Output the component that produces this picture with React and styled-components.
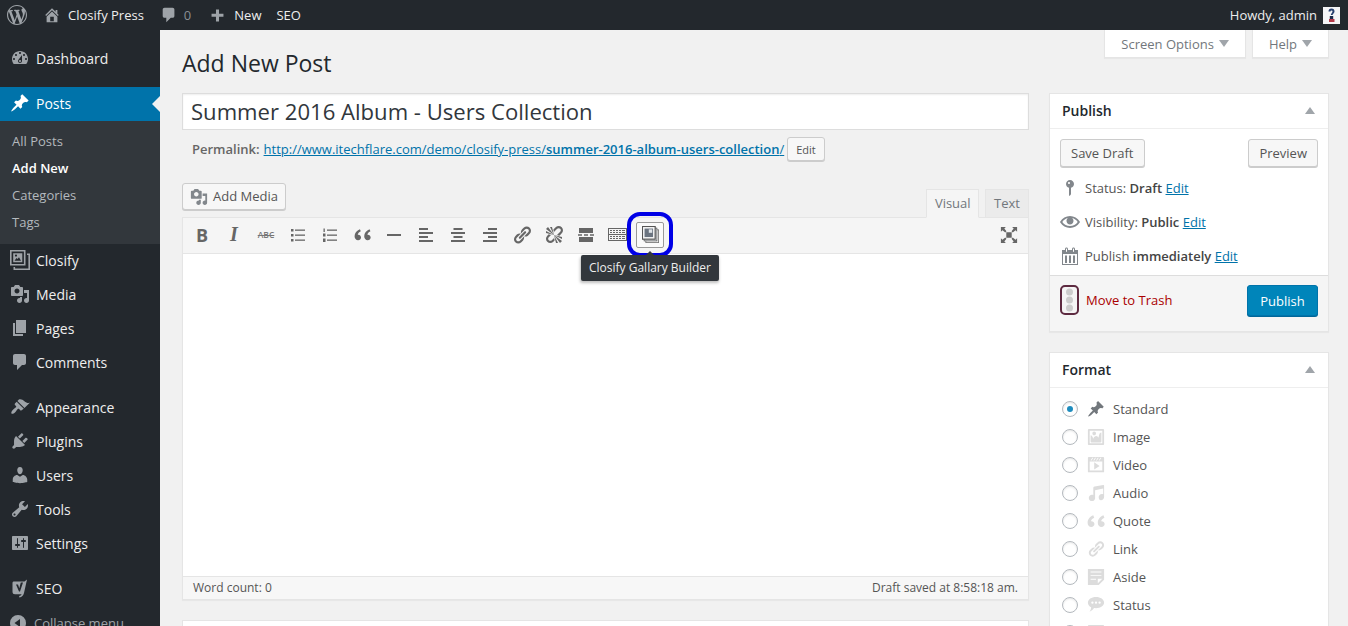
import React from 'react';
import styled, { createGlobalStyle } from 'styled-components';

const Global = createGlobalStyle`
  html, body { margin: 0; padding: 0; height: 626px; overflow: hidden; background: #f1f1f1; }
  body { font-family: "Open Sans", "Liberation Sans", sans-serif; font-size: 13px; color: #444; }
  * { box-sizing: border-box; }
`;

const P = {
  wp: 'M20 10c0-5.51-4.49-10-10-10C4.48 0 0 4.49 0 10c0 5.52 4.48 10 10 10 5.51 0 10-4.48 10-10zM7.78 15.37L4.37 6.22c.55-.02 1.17-.08 1.17-.08.5-.06.44-1.13-.06-1.11 0 0-1.45.11-2.37.11-.18 0-.37 0-.58-.01C4.12 2.69 6.87 1.11 10 1.11c2.33 0 4.45.87 6.05 2.34-.68-.11-1.65.39-1.65 1.58 0 .74.45 1.36.9 2.1.35.61.55 1.36.55 2.46 0 1.49-1.4 5-1.4 5l-3.03-8.37c.54-.02.82-.17.82-.17.5-.05.44-1.25-.06-1.22 0 0-1.44.12-2.38.12-.87 0-2.33-.12-2.33-.12-.5-.03-.56 1.2-.06 1.22l.92.08 1.26 3.41zM17.41 10c.24-.64.74-1.87.43-4.25.7 1.29 1.05 2.71 1.05 4.25 0 3.29-1.73 6.24-4.4 7.78.97-2.59 1.94-5.2 2.92-7.78zM6.1 18.09C3.12 16.65 1.11 13.53 1.11 10c0-1.3.23-2.48.72-3.59C3.25 10.3 4.67 14.2 6.1 18.09zm4.03-6.63l2.58 6.98c-.86.29-1.76.45-2.71.45-.79 0-1.57-.11-2.29-.33.81-2.38 1.62-4.74 2.42-7.1z',
  home: 'M16 8.5l1.53 1.53-1.06 1.06L10 4.62l-6.47 6.47-1.06-1.06L10 2.5l4 4v-2h2v4zm-6-2.46l6 5.99V18H4v-5.97zM12 17v-5H8v5h4z',
  comment: 'M5 2h9c1.1 0 2 .9 2 2v7c0 1.1-.9 2-2 2h-2l-5 5v-5H5c-1.1 0-2-.9-2-2V4c0-1.1.9-2 2-2z',
  plus: 'M17 8v3.5h-5.2V17H8.2v-5.5H3V8h5.2V3h3.6v5H17z',
  dashboard: 'M3.76 16h12.48c1.1-1.37 1.76-3.11 1.76-5 0-4.42-3.58-8-8-8s-8 3.58-8 8c0 1.89.66 3.63 1.76 5zM10 4c.55 0 1 .45 1 1s-.45 1-1 1-1-.45-1-1 .45-1 1-1zM6 6c.55 0 1 .45 1 1s-.45 1-1 1-1-.45-1-1 .45-1 1-1zm8 0c.55 0 1 .45 1 1s-.45 1-1 1-1-.45-1-1 .45-1 1-1zm-5.37 5.55L12 7v6c0 1.1-.9 2-2 2s-2-.9-2-2c0-.57.24-1.08.63-1.45zM4 10c.55 0 1 .45 1 1s-.45 1-1 1-1-.45-1-1 .45-1 1-1zm12 0c.55 0 1 .45 1 1s-.45 1-1 1-1-.45-1-1 .45-1 1-1zm-5 3c0-.55-.45-1-1-1s-1 .45-1 1 .45 1 1 1 1-.45 1-1z',
  pin: 'M10.44 3.02l1.82-1.82 6.36 6.35-1.83 1.82c-1.05-.68-2.48-.57-3.41.36l-.75.75c-.92.93-1.04 2.35-.35 3.41l-1.83 1.82-2.41-2.41-2.8 2.79c-.42.42-3.38 2.71-3.8 2.29s1.86-3.39 2.28-3.81l2.79-2.79L4.1 9.36l1.83-1.82c1.05.69 2.48.57 3.4-.36l.75-.75c.93-.92 1.05-2.35.36-3.41z',
  closify: 'M0 0h15.500v15.500H0V0zm1.600 1.600v12.300h12.300V1.600H1.600zM3.200 3.200h9.100v9.100H3.200V3.200zm1.300 7.600h6.500l-2-3.500-1.500 1.800-1-1-2 2.700zM6 4.500a1.100 1.100 0 100 2.200 1.100 1.100 0 000-2.200zM17 3.500h3V20H3.500v-3h1.600v1.400h13.300V5.100H17V3.500z',
  media: 'M13 11V4c0-.55-.45-1-1-1h-1.670L9 1H5L3.670 3H2c-.55 0-1 .45-1 1v7c0 .55.45 1 1 1h10c.55 0 1-.45 1-1zM7 4.500c1.380 0 2.500 1.120 2.500 2.500S8.380 9.500 7 9.500 4.500 8.380 4.500 7 5.620 4.500 7 4.500zM14 6h5v10.500c0 1.380-1.120 2.500-2.500 2.500S14 17.880 14 16.500s1.120-2.500 2.500-2.500c.17 0 .34.02.5.05V9h-3V6zm-4 8.050V13h2v3.500c0 1.380-1.120 2.500-2.500 2.500S7 17.880 7 16.500 8.120 14 9.500 14c.17 0 .34.02.5.05z',
  page: 'M6 15V2h10v13H6zm-1 1h8v2H3V5h2v11z',
  brush: 'M14.48 11.06L7.41 3.99l1.5-1.5c.5-.56 2.3-.47 3.51.32 1.21.8 1.43 1.28 2.91 2.1 1.18.64 2.45 1.26 4.45.85zm-.71.71L6.7 4.7 4.93 6.47c-.39.39-.39 1.02 0 1.41l1.06 1.06c.39.39.39 1.03 0 1.42-.6.6-1.43 1.11-2.21 1.69-.35.26-.7.53-1.01.84-1.43 1.43-1.78 3.2-1.27 3.71s2.28.16 3.71-1.27c.31-.31.58-.66.84-1.01.58-.78 1.09-1.61 1.69-2.21.39-.39 1.03-.39 1.42 0l1.06 1.06c.39.39 1.02.39 1.41 0z',
  plug: 'M13.11 4.36L9.87 7.6 8 5.73l3.24-3.24c.35-.34 1.05-.2 1.56.32.52.51.66 1.21.31 1.55zm-8 1.77l.91-1.12 9.01 9.01-1.19.84c-.71.71-2.63 1.16-3.82 1.16H6.14L4.9 17.26c-.59.59-1.54.59-2.12 0-.59-.58-.59-1.53 0-2.12l1.24-1.24v-3.88c0-1.13.4-3.19 1.09-3.89zm7.26 3.97l3.24-3.24c.34-.35 1.04-.21 1.55.31.52.51.66 1.21.31 1.55l-3.24 3.25z',
  users: 'M10 9.25c-2.27 0-2.73-3.44-2.73-3.44C7 4.02 7.82 2 9.97 2c2.16 0 2.98 2.02 2.71 3.81 0 0-.41 3.44-2.68 3.44zm0 2.57L12.72 10c2.39 0 4.52 2.33 4.52 4.53v2.49s-3.65 1.13-7.24 1.13c-3.65 0-7.24-1.13-7.24-1.13v-2.49c0-2.25 1.94-4.48 4.47-4.48z',
  tools: 'M16.68 9.77c-1.34 1.34-3.3 1.67-4.95.99l-5.41 6.52c-.99.99-2.59.99-3.58 0s-.99-2.59 0-3.57l6.52-5.42c-.68-1.65-.35-3.61.99-4.95 1.28-1.28 3.12-1.62 4.72-1.06l-2.89 2.89 2.82 2.82 2.86-2.87c.53 1.58.18 3.39-1.08 4.65zM3.81 16.21c.4.39 1.04.39 1.43 0 .4-.4.4-1.04 0-1.43-.39-.4-1.03-.4-1.43 0-.39.39-.39 1.03 0 1.43z',
  settings: 'M18 16V4c0-.55-.45-1-1-1H3c-.55 0-1 .45-1 1v12c0 .55.45 1 1 1h14c.55 0 1-.45 1-1zM8 11h1c.55 0 1 .45 1 1s-.45 1-1 1H8v1.5c0 .28-.22.5-.5.5s-.5-.22-.5-.5V13H6c-.55 0-1-.45-1-1s.45-1 1-1h1V5.5c0-.28.22-.5.5-.5s.5.22.5.5V11zm5-2h-1c-.55 0-1-.45-1-1s.45-1 1-1h1V5.5c0-.28.22-.5.5-.5s.5.22.5.5V7h1c.55 0 1 .45 1 1s-.45 1-1 1h-1v5.5c0 .28-.22.5-.5.5s-.5-.22-.5-.5V9z',
  seo: 'M3.5 3.5h11L17 1.5 14 15c-.6 2.4-2.2 4-4.6 4.5l-.3-1.4c1.2-.3 2-.9 2.5-1.9H5a2.5 2.5 0 01-2.5-2.5V5a1.5 1.5 0 011-1.5zM6 6.5l3 7 1 .1 3-9h-2.2l-1.5 5.6-1.3-3.7H6z',
  collapse: 'M10 2a8 8 0 100 16 8 8 0 000-16zm2 4v8L6.500 10 12 6z',
  quote: 'M8.5 6.2C6.9 6.9 6 8 5.8 9.2c1.6-.2 2.9.9 2.9 2.4 0 1.4-1.1 2.4-2.6 2.4-1.8 0-3.1-1.4-3.1-3.5 0-2.7 1.9-5.1 4.7-6.2l.8 1.9zm8.5 0c-1.6.7-2.5 1.8-2.7 3 1.6-.2 2.9.9 2.9 2.4 0 1.4-1.1 2.4-2.6 2.4-1.8 0-3.1-1.4-3.1-3.5 0-2.7 1.900-5.100 4.700-6.200l.8 1.900z',
  link: 'M17.74 2.76c1.68 1.69 1.68 4.41 0 6.1l-1.53 1.52c-1.12 1.12-2.7 1.47-4.14 1.09l2.62-2.61.76-.77.76-.76c.84-.84.84-2.2 0-3.04-.84-.85-2.2-.85-3.04 0l-.77.76-3.38 3.38c-.37-1.44-.02-3.02 1.1-4.14l1.52-1.53c1.69-1.68 4.42-1.68 6.1 0zM8.59 13.43l5.34-5.34c.42-.42.42-1.1 0-1.52-.44-.43-1.13-.39-1.53 0l-5.33 5.34c-.42.42-.42 1.1 0 1.52.44.43 1.13.39 1.52 0zm-.76 2.29l4.14-4.15c.38 1.44.03 3.02-1.09 4.14l-1.52 1.53c-1.69 1.68-4.41 1.68-6.1 0-1.68-1.68-1.68-4.42 0-6.1l1.53-1.52c1.12-1.12 2.7-1.47 4.14-1.1l-4.14 4.15c-.85.84-.85 2.2 0 3.05.84.84 2.2.84 3.04 0z',
  unlink: 'M17.74 2.26c1.68 1.69 1.68 4.41 0 6.1l-1.53 1.52c-.32.33-.69.58-1.08.77L13 10l1.69-1.64.76-.77.76-.76c.84-.84.84-2.2 0-3.04-.84-.85-2.2-.85-3.04 0l-.77.76-.76.76L10 7l-.65-2.14c.19-.38.44-.75.77-1.07l1.52-1.53c1.69-1.68 4.42-1.68 6.1 0zM2 4l8 6-6-8zm4-2l4 8-2-8H6zM2 6l8 4-8-2V6zm7.36 7.69L10 13l.74 2.35-1.38 1.39c-1.69 1.68-4.41 1.68-6.1 0-1.68-1.68-1.68-4.42 0-6.1l1.39-1.38L7 10l-.69.64-1.52 1.53c-.85.84-.85 2.2 0 3.04.84.85 2.2.85 3.04 0zM18 16l-8-6 6 8zm-4 2l-4-8 2 8h2zm4-4l-8-4 8 2v2z',
  more: 'M3 3h14v5H3V3zm0 9h14v5H3v-5zM2 9.3h4v1.4H2V9.3zm6 0h4v1.4H8V9.3zm6 0h4v1.4h-4V9.3z',
  kitchen: 'M0 3h19v13H0V3zm1 1v5h17V4H1zm0 6v5h17v-5H1zm1-5h2v1H2V5zm3 0h2v1H5V5zm3 0h2v1H8V5zm3 0h2v1h-2V5zm3 0h3v1h-3V5zM2 7h2v1H2V7zm3 0h2v1H5V7zm3 0h2v1H8V7zm3 0h2v1h-2V7zm3 0h3v1h-3V7zM2 11h2v1H2v-1zm3 0h2v1H5v-1zm3 0h2v1H8v-1zm3 0h2v1h-2v-1zm3 0h3v1h-3v-1zM2 13h2v1H2v-1zm3 0h2v1H5v-1zm3 0h2v1H8v-1zm3 0h2v1h-2v-1zm3 0h3v1h-3v-1z',
  fullscreen: 'M7 7h6v6H7V7zM1 1h5.5L4.8 2.7 7.2 5.9 5.9 7.2 2.7 4.8 1 6.5V1zm18 0v5.5l-1.7-1.7-3.2 2.4-1.3-1.3 2.4-3.2L13.5 1H19zM1 19v-5.5l1.7 1.7 3.2-2.4 1.3 1.3-2.4 3.2L6.5 19H1zm18 0h-5.5l1.7-1.7-2.4-3.2 1.3-1.3 3.2 2.4 1.7-1.7V19z',
  status: 'M14 6c0 1.86-1.28 3.41-3 3.86V16c0 1-2 2-2 2V9.86c-1.72-.45-3-2-3-3.86 0-2.21 1.79-4 4-4s4 1.79 4 4zM8 5c0 .55.45 1 1 1s1-.45 1-1-.45-1-1-1-1 .45-1 1z',
  eye: 'M19.7 9.4C17.7 6 14 3.9 10 3.9S2.3 6 .3 9.4L0 10l.3.6c2 3.4 5.7 5.5 9.7 5.5s7.7-2.1 9.7-5.5l.3-.6-.3-.6zM10 14.1c-3.1 0-6-1.6-7.7-4.1C3.6 8 5.7 6.6 8 6.1c-.9.6-1.5 1.7-1.5 2.9 0 1.9 1.6 3.5 3.5 3.5s3.5-1.6 3.5-3.5c0-1.2-.6-2.3-1.5-2.9 2.3.5 4.4 1.9 5.7 3.9-1.7 2.5-4.6 4.1-7.7 4.1z',
  calendar: 'M15 4h3v15H2V4h3V3c0-.41.15-.76.44-1.06.29-.29.65-.44 1.06-.44s.77.15 1.06.44c.29.3.44.65.44 1.06v1h4V3c0-.41.15-.76.44-1.06.29-.29.65-.44 1.06-.44s.77.15 1.06.44c.29.3.44.65.44 1.06v1zM6 3v2.5c0 .14.05.26.15.36.09.09.21.14.35.14s.26-.05.35-.14c.1-.1.15-.22.15-.36V3c0-.14-.05-.26-.15-.35-.09-.1-.21-.15-.35-.15s-.26.05-.35.15c-.1.09-.15.21-.15.35zm7 0v2.5c0 .14.05.26.14.36.1.09.22.14.36.14s.26-.05.36-.14c.09-.1.14-.22.14-.36V3c0-.14-.05-.26-.14-.35-.1-.1-.22-.15-.36-.15s-.26.05-.36.15c-.09.09-.14.21-.14.35zm4 15V8H3v10h14zM5 9.5h2V17H5V9.5zm4 0h2V17H9V9.5zm4 0h2V17h-2V9.5z',
  image: 'M2.25 1h15.5c.69 0 1.25.56 1.25 1.25v15.5c0 .69-.56 1.25-1.25 1.25H2.25C1.56 19 1 18.44 1 17.75V2.25C1 1.56 1.56 1 2.25 1zM17 17V3H3v14h14zM10 6c0-1.1-.9-2-2-2s-2 .9-2 2 .9 2 2 2 2-.9 2-2zm3 5s0-6 3-6v10c0 .55-.45 1-1 1H5c-.55 0-1-.45-1-1V8c2 0 3 4 3 4s1-3 3-3 3 2 3 2z',
  video: 'M2 1h16c.55 0 1 .45 1 1v16l-18-.02V2c0-.55.45-1 1-1zm4 1L4 5h1l2-3H6zm4 0H9L7 5h1zm3 0h-1l-2 3h1zm3 0h-1l-2 3h1zm1 14V6H3v10h14zM8 7l6 4-6 4V7z',
  audio: 'M6.99 3.08l11.02-2c.55-.08.99.45.99 1V14.5c0 1.94-1.57 3.5-3.5 3.5S13 16.44 13 14.5c0-1.93 1.57-3.5 3.5-3.5.54 0 1.04.14 1.5.35V5.08l-9 2V16c-.24 1.7-1.74 3-3.5 3C3.57 19 2 17.44 2 15.5 2 13.57 3.57 12 5.5 12c.54 0 1.04.14 1.5.35V4.08c0-.55.44-.92.99-1z',
  aside: 'M1 1h18v12l-6 6H1V1zm3 3v1h12V4H4zm0 4v1h12V8H4zm6 5v-1H4v1h6zm2 4l5-5h-5v5z',
  chat: 'M10 1c5 0 9 2.7 9 6.2s-4 6.3-9 6.3c-.8 0-1.5-.1-2.2-.2-1.3 1.8-3 3.1-5 4.2 1.1-1.4 1.7-3 1.8-5C2.3 11.4 1 9.4 1 7.2 1 3.7 5 1 10 1zM6 6a1.3 1.3 0 100 2.600A1.3 1.3 0 006 6zm4 0a1.3 1.3 0 100 2.600A1.3 1.3 0 0010 6zm4 0a1.3 1.3 0 100 2.600A1.3 1.3 0 0014 6z',
};

const QUOTE_VIEW = '2.5 1.5 15 15';

const Svg = styled.svg`
  display: block;
  flex: none;
  fill: ${p => p.$color || 'currentColor'};
`;
const Icon = ({ d, size = 20, color, view = '0 0 20 20' }) => (
  <Svg width={size} height={size} viewBox={view} $color={color} fillRule="evenodd"><path d={d} /></Svg>
);

const TopBar = styled.header`
  height: 30px;
  background: #23282d;
  color: #eee;
  display: flex;
  align-items: center;
  padding: 0 8px 0 7px;
  font-size: 13px;
`;
const BarItem = styled.span`
  display: flex;
  align-items: center;
  gap: ${p => p.$gap || 7}px;
  margin-left: ${p => p.$ml || 0}px;
  color: #eee;
`;
const BarCount = styled.span`
  color: #8a8f94;
`;
const Howdy = styled.span`
  margin-left: auto;
  display: flex;
  align-items: center;
  gap: 6px;
  color: #eee;
`;
const Avatar = styled.svg`
  display: block;
  width: 17px;
  height: 17px;
`;

const Shell = styled.div`
  display: flex;
  height: 596px;
  overflow: hidden;
`;
const Side = styled.nav`
  width: 160px;
  flex: none;
  background: #23282d;
  padding-top: 12px;
`;
const MenuItem = styled.div`
  position: relative;
  height: 34px;
  display: flex;
  align-items: center;
  gap: 6px;
  padding: 0 0 2px 10px;
  margin-top: ${p => p.$sep ? 11 : 0}px;
  font-size: 14px;
  color: ${p => p.$active ? '#fff' : '#eee'};
  background: ${p => p.$active ? '#0073aa' : 'transparent'};
  svg { fill: ${p => p.$active ? '#fff' : '#9ea3a8'}; }
  ${p => p.$active && `
    &::after {
      content: '';
      position: absolute;
      right: 0;
      top: 9px;
      border: 8px solid transparent;
      border-right-color: #f1f1f1;
      border-left-width: 0;
    }
  `}
`;
const SubMenu = styled.div`
  background: #32373c;
  padding: 7px 0 8px;
`;
const SubItem = styled.div`
  height: 27px;
  line-height: 27px;
  padding-left: 12px;
  font-size: 13px;
  color: ${p => p.$current ? '#fff' : '#b4b9be'};
  font-weight: ${p => p.$current ? 600 : 400};
`;
const Collapse = styled.div`
  height: 34px;
  display: flex;
  align-items: center;
  gap: 6px;
  padding-left: 8px;
  font-size: 13px;
  color: #9ea3a8;
  svg { fill: #9ea3a8; }
`;

const Main = styled.main`
  flex: 1;
  min-width: 0;
  padding: 0 19px 0 22px;
`;
const MetaRow = styled.div`
  float: right;
  display: flex;
  gap: 6px;
`;
const MetaTab = styled.div`
  height: 28px;
  display: flex;
  align-items: center;
  gap: 5px;
  padding: 0 16px;
  background: #fff;
  border: 1px solid #e5e5e5;
  border-top: 0;
  box-shadow: 0 1px 1px rgba(0,0,0,.04);
  color: #72777c;
  font-size: 13px;
  &::after {
    content: '';
    border: 5px solid transparent;
    border-top: 7px solid #a0a5aa;
    border-bottom: 0;
  }
`;
const Heading = styled.h1`
  margin: 0;
  height: 63px;
  padding-top: 16px;
  line-height: 34px;
  font-size: 23px;
  font-weight: 400;
  color: #23282d;
`;
const Columns = styled.div`
  display: flex;
  gap: 20px;
  align-items: flex-start;
`;
const Left = styled.div`
  width: 847px;
  flex: none;
`;
const Right = styled.aside`
  width: 280px;
  flex: none;
  display: flex;
  flex-direction: column;
  gap: 20px;
`;
const TitleInput = styled.div`
  height: 37px;
  background: #fff;
  border: 1px solid #ddd;
  box-shadow: inset 0 1px 2px rgba(0,0,0,.07);
  padding-left: 8px;
  line-height: 34px;
  font-size: 22.1px;
  color: #32373c;
`;
const Permalink = styled.div`
  display: flex;
  align-items: center;
  height: 24px;
  margin-top: 7px;
  padding-left: 10px;
  color: #666;
  font-size: 13px;
  gap: 3px;
  strong { font-weight: 600; margin-right: 1px; }
`;
const LinkText = styled.a`
  color: #0073aa;
  text-decoration: underline;
  b { font-weight: 600; }
`;
const Button = styled.span`
  display: inline-flex;
  align-items: center;
  gap: ${p => p.$gap || 4}px;
  height: ${p => p.$h || 28}px;
  padding: 0 ${p => p.$px || 10}px;
  background: #f7f7f7;
  border: 1px solid #ccc;
  border-radius: 3px;
  box-shadow: 0 1px 0 #ccc;
  color: #555;
  font-size: ${p => p.$fs || 13}px;
  line-height: 1;
  white-space: nowrap;
`;
const EditorHead = styled.div`
  display: flex;
  align-items: flex-end;
  justify-content: space-between;
  margin-top: 22px;
  height: 34px;
`;
const HeadButton = styled.div`
  align-self: flex-start;
`;
const Tabs = styled.div`
  display: flex;
  gap: 6px;
`;
const Tab = styled.div`
  height: 29px;
  line-height: 26px;
  padding: 0 ${p => p.$active ? 7.5 : 8}px;
  background: ${p => p.$active ? '#f5f5f5' : '#ebebeb'};
  border: 1px solid #e5e5e5;
  border-bottom: ${p => p.$active ? '1px solid #f5f5f5' : '1px solid #e5e5e5'};
  color: #72777c;
  font-size: 13px;
  margin-bottom: -1px;
  position: relative;
`;
const Editor = styled.div`
  border: 1px solid #e5e5e5;
  background: #fff;
  box-shadow: 0 1px 1px rgba(0,0,0,.04);
`;
const Toolbar = styled.div`
  height: 36px;
  display: flex;
  align-items: center;
  gap: 4px;
  padding: 0 5px 2px;
  background: #f5f5f5;
  border-bottom: 1px solid #e5e5e5;
`;
const ToolBtn = styled.span`
  position: relative;
  width: 28px;
  height: 26px;
  display: flex;
  align-items: center;
  justify-content: center;
  flex: none;
  color: #555d66;
  border-radius: 2px;
  ${p => p.$end && 'margin-left: auto;'}
  ${p => p.$active && `
    border: 1px solid #999;
    background: #fafafa;
  `}
`;
const Bold = styled.span`
  font-weight: 700;
  font-size: 18px;
  color: #666;
`;
const Italic = styled.span`
  font-family: "Liberation Serif", serif;
  font-weight: 700;
  font-style: italic;
  font-size: 20px;
  color: #666;
`;
const Strike = styled.span`
  font-size: 8.5px;
  font-weight: 600;
  color: #777;
  text-decoration: line-through;
`;
const Lines = styled.svg`
  display: block;
  width: 20px;
  height: 20px;
  fill: #666;
`;
const GalleryIcon = styled.svg`
  display: block;
  width: 17px;
  height: 17px;
`;
const Highlight = styled.span`
  position: absolute;
  inset: -11px -10px -10px -10px;
  border: 4px solid #0000e6;
  border-radius: 13px;
  pointer-events: none;
`;
const Tooltip = styled.span`
  position: absolute;
  top: 32px;
  left: 50%;
  transform: translateX(-50%);
  height: 26px;
  line-height: 26px;
  padding: 0 8px;
  background: #32373c;
  color: #eee;
  font-size: 12px;
  white-space: nowrap;
  border-radius: 2px;
  box-shadow: 0 2px 3px rgba(0,0,0,.25);
  z-index: 2;
  &::before {
    content: '';
    position: absolute;
    top: -4px;
    left: 50%;
    margin-left: -4px;
    border: 4px solid transparent;
    border-top: 0;
    border-bottom-color: #32373c;
  }
`;
const EditArea = styled.div`
  height: 322px;
  background: #fff;
`;
const StatusBar = styled.div`
  height: 23px;
  display: flex;
  align-items: center;
  justify-content: space-between;
  padding: 0 10px 1px;
  background: #f7f7f7;
  border-top: 1px solid #e5e5e5;
  color: #555;
  font-size: 12px;
`;
const NextBox = styled.div`
  height: 40px;
  margin-top: 20px;
  background: #fff;
  border: 1px solid #e5e5e5;
`;

const Box = styled.section`
  background: #fff;
  border: 1px solid #e5e5e5;
  box-shadow: 0 1px 1px rgba(0,0,0,.04);
`;
const BoxHead = styled.div`
  height: 35px;
  display: flex;
  align-items: center;
  justify-content: space-between;
  padding: 0 12px 2px;
  border-bottom: 1px solid #eee;
  font-size: 14px;
  font-weight: 600;
  color: #23282d;
  &::after {
    content: '';
    border: 5px solid transparent;
    border-bottom: 7px solid #a0a5aa;
    border-top: 0;
    margin-right: 1px;
  }
`;
const Actions = styled.div`
  display: flex;
  justify-content: space-between;
  padding: 10px 10px 0;
`;
const Misc = styled.div`
  padding: 4px 10px 0;
`;
const MiscRow = styled.div`
  height: 34px;
  display: flex;
  align-items: center;
  gap: 5px;
  color: #555;
  b { font-weight: 600; color: #444; }
`;
const MiscIcon = styled.span`
  width: 20px;
  display: flex;
  justify-content: center;
  flex: none;
`;
const MiscText = styled.span`
  display: inline;
`;
const PublishFoot = styled.div`
  height: 56px;
  margin-top: 2px;
  display: flex;
  align-items: flex-start;
  justify-content: space-between;
  padding: 9px 10px 0;
  background: #f5f5f5;
  border-top: 1px solid #ddd;
`;
const Trash = styled.span`
  display: flex;
  align-items: center;
  gap: 7px;
  color: #a00;
`;
const PrimaryBtn = styled.span`
  height: 31px;
  width: 71px;
  display: flex;
  align-items: center;
  justify-content: center;
  background: #0085ba;
  border: 1px solid #0073aa;
  border-radius: 3px;
  box-shadow: 0 1px 0 #006799;
  color: #fff;
  font-size: 13px;
`;
const FormatList = styled.div`
  padding: 7px 12px 0;
`;
const FormatRow = styled.label`
  height: 28px;
  display: flex;
  align-items: center;
  color: #555;
  font-size: 13px;
`;
const Radio = styled.input`
  appearance: none;
  width: 16px;
  height: 16px;
  margin: 0 9px 0 0;
  flex: none;
  background: #fff;
  border: 1px solid #b4b9be;
  border-radius: 50%;
  box-shadow: inset 0 1px 2px rgba(0,0,0,.1);
  display: flex;
  align-items: center;
  justify-content: center;
  &:checked::before {
    content: '';
    width: 6px;
    height: 6px;
    border-radius: 50%;
    background: #1e8cbe;
  }
`;
const FormatIcon = styled.span`
  width: 18px;
  margin-right: 8px;
  flex: none;
  display: flex;
`;

const menuA = [['closify', 'Closify'], ['media', 'Media'], ['page', 'Pages'], ['comment', 'Comments']];
const menuB = [['brush', 'Appearance'], ['plug', 'Plugins'], ['users', 'Users'], ['tools', 'Tools'], ['settings', 'Settings']];
const formats = [
  ['pin', 'Standard', '#72777c'], ['image', 'Image'], ['video', 'Video'], ['audio', 'Audio'],
  ['quote', 'Quote', null, QUOTE_VIEW], ['link', 'Link'], ['aside', 'Aside'], ['chat', 'Status'], ['image', 'Gallery'],
];

const bars = (rows) => rows.map(([x, y, w, h], i) => <rect key={i} x={x} y={y} width={w} height={h} />);

export default function App() {
  return (
    <>
      <Global />
      <TopBar>
        <BarItem><Icon d={P.wp} color="#9ea3a8" /></BarItem>
        <BarItem $ml={16}><Icon d={P.home} size={18} color="#9ea3a8" /><span>Closify Press</span></BarItem>
        <BarItem $ml={16} $gap={6}><Icon d={P.comment} size={18} color="#9ea3a8" /><BarCount>0</BarCount></BarItem>
        <BarItem $ml={18} $gap={8}><Icon d={P.plus} size={17} color="#9ea3a8" /><span>New</span></BarItem>
        <BarItem $ml={15}>SEO</BarItem>
        <Howdy>
          Howdy, admin
          <Avatar viewBox="0 0 17 17">
            <rect width="17" height="17" fill="#f4f4f6" />
            <path d="M5.500 4.500a3 3 0 116 0c0 1.500-1.500 2.300-2 3.500H7.800c0-1.500 1.700-2.300 1.700-3.500a1 1 0 00-2 0H5.500z" fill="#27406f" />
            <rect x="6.800" y="9" width="3.400" height="3" fill="#1c2a4a" />
            <rect x="6" y="12" width="5.500" height="3" fill="#b33a4a" />
          </Avatar>
        </Howdy>
      </TopBar>
      <Shell>
        <Side>
          <MenuItem><Icon d={P.dashboard} />Dashboard</MenuItem>
          <MenuItem $sep $active><Icon d={P.pin} />Posts</MenuItem>
          <SubMenu>
            <SubItem>All Posts</SubItem>
            <SubItem $current>Add New</SubItem>
            <SubItem>Categories</SubItem>
            <SubItem>Tags</SubItem>
          </SubMenu>
          {menuA.map(([i, t]) => <MenuItem key={t}><Icon d={P[i]} />{t}</MenuItem>)}
          {menuB.map(([i, t], n) => <MenuItem key={t} $sep={n === 0}><Icon d={P[i]} />{t}</MenuItem>)}
          <MenuItem $sep><Icon d={P.seo} />SEO</MenuItem>
          <Collapse><Icon d={P.collapse} />Collapse menu</Collapse>
        </Side>
        <Main>
          <MetaRow>
            <MetaTab>Screen Options</MetaTab>
            <MetaTab>Help</MetaTab>
          </MetaRow>
          <Heading>Add New Post</Heading>
          <Columns>
            <Left>
              <TitleInput>Summer 2016 Album - Users Collection</TitleInput>
              <Permalink>
                <strong>Permalink:</strong>
                <LinkText>http://www.itechflare.com/demo/closify-press/<b>summer-2016-album-users-collection</b>/</LinkText>
                <Button $h={24} $px={8} $fs={11}>Edit</Button>
              </Permalink>
              <EditorHead>
                <HeadButton>
                  <Button $h={27} $px={7} $gap={5}><Icon d={P.media} size={18} color="#82878c" /> Add Media</Button>
                </HeadButton>
                <Tabs>
                  <Tab $active>Visual</Tab>
                  <Tab>Text</Tab>
                </Tabs>
              </EditorHead>
              <Editor>
                <Toolbar>
                  <ToolBtn><Bold>B</Bold></ToolBtn>
                  <ToolBtn><Italic>I</Italic></ToolBtn>
                  <ToolBtn><Strike>ABC</Strike></ToolBtn>
                  <ToolBtn><Lines viewBox="0 0 20 20">{bars([[3, 4, 2.500, 2.500], [3, 9, 2.500, 2.500], [3, 14, 2.500, 2.500], [7, 4.500, 10, 1.300], [7, 9.500, 10, 1.300], [7, 14.500, 10, 1.300]])}</Lines></ToolBtn>
                  <ToolBtn><Lines viewBox="0 0 20 20">{bars([[3.500, 3.500, 1.300, 3.500], [3, 8.500, 2.500, 3], [3, 13.500, 2.500, 3.500], [7, 4.500, 10, 1.300], [7, 9.500, 10, 1.300], [7, 14.500, 10, 1.300]])}</Lines></ToolBtn>
                  <ToolBtn><Icon d={P.quote} size={17} color="#666" view={QUOTE_VIEW} /></ToolBtn>
                  <ToolBtn><Lines viewBox="0 0 20 20">{bars([[3, 9, 14, 2]])}</Lines></ToolBtn>
                  <ToolBtn><Lines viewBox="0 0 20 20">{bars([[3, 3, 9, 2], [3, 7, 14, 2], [3, 11, 9, 2], [3, 15, 14, 2]])}</Lines></ToolBtn>
                  <ToolBtn><Lines viewBox="0 0 20 20">{bars([[5.500, 3, 9, 2], [3, 7, 14, 2], [5.500, 11, 9, 2], [3, 15, 14, 2]])}</Lines></ToolBtn>
                  <ToolBtn><Lines viewBox="0 0 20 20">{bars([[8, 3, 9, 2], [3, 7, 14, 2], [8, 11, 9, 2], [3, 15, 14, 2]])}</Lines></ToolBtn>
                  <ToolBtn><Icon d={P.link} color="#666" /></ToolBtn>
                  <ToolBtn><Icon d={P.unlink} color="#666" /></ToolBtn>
                  <ToolBtn><Icon d={P.more} color="#666" /></ToolBtn>
                  <ToolBtn><Icon d={P.kitchen} color="#666" /></ToolBtn>
                  <ToolBtn $active>
                    <GalleryIcon viewBox="0 0 20 20">
                      <rect x="4.500" y="4.500" width="15" height="15" fill="#f2f2f2" stroke="#777" />
                      <rect x="2.500" y="2.500" width="15" height="15" fill="#e8edf2" stroke="#666" />
                      <rect x="0.500" y="0.500" width="15" height="15" fill="#f5f5f5" stroke="#555" strokeWidth="1.400" />
                      <rect x="3" y="3" width="10" height="10" fill="#6b7480" />
                      <rect x="8" y="4" width="4" height="4" fill="#dfe4e8" />
                    </GalleryIcon>
                    <Highlight />
                    <Tooltip>Closify Gallary Builder</Tooltip>
                  </ToolBtn>
                  <ToolBtn $end><Icon d={P.fullscreen} size={18} color="#666" /></ToolBtn>
                </Toolbar>
                <EditArea />
                <StatusBar>
                  <span>Word count: 0</span>
                  <span>Draft saved at 8:58:18 am.</span>
                </StatusBar>
              </Editor>
              <NextBox />
            </Left>
            <Right>
              <Box>
                <BoxHead>Publish</BoxHead>
                <Actions>
                  <Button>Save Draft</Button>
                  <Button>Preview</Button>
                </Actions>
                <Misc>
                  <MiscRow>
                    <MiscIcon><Icon d={P.status} color="#82878c" /></MiscIcon>
                    <MiscText>Status: <b>Draft</b> <LinkText>Edit</LinkText></MiscText>
                  </MiscRow>
                  <MiscRow>
                    <MiscIcon><Icon d={P.eye} color="#82878c" /></MiscIcon>
                    <MiscText>Visibility: <b>Public</b> <LinkText>Edit</LinkText></MiscText>
                  </MiscRow>
                  <MiscRow>
                    <MiscIcon><Icon d={P.calendar} color="#82878c" /></MiscIcon>
                    <MiscText>Publish <b>immediately</b> <LinkText>Edit</LinkText></MiscText>
                  </MiscRow>
                </Misc>
                <PublishFoot>
                  <Trash>
                    <svg width="19" height="30" viewBox="0 0 19 30">
                      <rect x="1" y="1" width="17" height="28" rx="4" fill="none" stroke="#5d2a40" strokeWidth="2" />
                      <circle cx="9.500" cy="7" r="3.500" fill="#ccc" />
                      <circle cx="9.500" cy="15" r="3.500" fill="#ccc" />
                      <circle cx="9.500" cy="23" r="3.500" fill="#ccc" />
                    </svg>
                    Move to Trash
                  </Trash>
                  <PrimaryBtn>Publish</PrimaryBtn>
                </PublishFoot>
              </Box>
              <Box>
                <BoxHead>Format</BoxHead>
                <FormatList>
                  {formats.map(([i, t, c, v], n) => (
                    <FormatRow key={t}>
                      <Radio type="radio" name="fmt" defaultChecked={n === 0} />
                      <FormatIcon><Icon d={P[i]} size={18} color={c || '#dcdcdc'} view={v || undefined} /></FormatIcon>
                      {t}
                    </FormatRow>
                  ))}
                </FormatList>
              </Box>
            </Right>
          </Columns>
        </Main>
      </Shell>
    </>
  );
}
